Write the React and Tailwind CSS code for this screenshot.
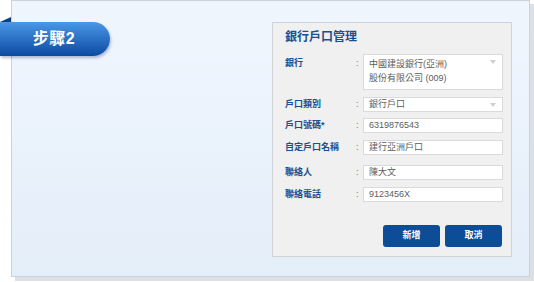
import React from "react"

const cjk = { fontFamily: '"Liberation Sans", "Noto Sans CJK TC", sans-serif' }

function Field({ label, children, className = "", labelClass = "" }) {
  return (
    <div className={`flex items-start ${className}`}>
      <div className={`w-[71px] text-[9px] leading-[15px] font-bold text-[#1b4f91] ${labelClass}`}>{label}</div>
      <div className={`w-[6px] text-[9px] leading-[15px] text-[#777] ${labelClass}`}>:</div>
      {children}
    </div>
  )
}

function Box({ children, select, tall }) {
  return (
    <div
      className={`relative w-[140px] ml-[1px] bg-white border border-[#dadada] text-[9px] text-[#5c5c5c] px-[5px] ${
        tall ? "h-[36px] pt-[2px] leading-[14px]" : "h-[15px] leading-[13px]"
      }`}
    >
      {children}
      {select && (
        <span className="absolute right-[6px] top-[5px] w-0 h-0 border-l-[3px] border-r-[3px] border-t-[4px] border-l-transparent border-r-transparent border-t-[#d0d0d0]" />
      )}
    </div>
  )
}

export default function App() {
  return (
    <div className="relative w-[534px] h-[282px] bg-white overflow-hidden" style={cjk}>
      <div className="ml-[11px] w-[519px] h-[277px] border border-[#ccd2da] bg-gradient-to-b from-[#f0f6fe] to-[#e4eef9] shadow-[4px_4px_0_#dcdfe3] flex pt-[21px]">
        <div className="ml-[260px] w-[240px] h-[235px] bg-[#f0f0f0] border border-[#cfd3d8] pl-[12px] pt-[6px]">
          <div className="text-[12px] leading-[16px] font-bold text-[#1b4f91]">銀行戶口管理</div>

          <Field label="銀行" className="mt-[9px]" labelClass="pt-[2px]">
            <Box select tall>
              <div>中國建設銀行(亞洲)</div>
              <div>股份有限公司 (009)</div>
            </Box>
          </Field>
          <Field label="戶口類別" className="mt-[7px]">
            <Box select>銀行戶口</Box>
          </Field>
          <Field label="戶口號碼*" className="mt-[6px]">
            <Box>6319876543</Box>
          </Field>
          <Field label="自定戶口名稱" className="mt-[7px]">
            <Box>建行亞洲戶口</Box>
          </Field>
          <Field label="聯絡人" className="mt-[10px]">
            <Box>陳大文</Box>
          </Field>
          <Field label="聯絡電話" className="mt-[7px]">
            <Box>9123456X</Box>
          </Field>

          <div className="flex justify-end gap-[5px] mt-[23px] pr-[9px]">
            <button className="w-[57px] h-[22px] rounded-[3px] bg-[#0d4d97] text-white text-[9px] font-bold">新增</button>
            <button className="w-[57px] h-[22px] rounded-[3px] bg-[#0d4d97] text-white text-[9px] font-bold">取消</button>
          </div>
        </div>
      </div>

      {/* step ribbon */}
      <div className="absolute left-0 top-[17px] w-0 h-0 border-b-[5px] border-l-[11px] border-b-[#0b3f88] border-l-transparent" />
      <div className="absolute left-0 top-[22px] w-[110px] h-[34px] rounded-r-full bg-gradient-to-b from-[#4a98e6] to-[#0b4aa3] shadow-[1px_2px_3px_rgba(40,70,120,0.35)] flex items-center justify-center pr-[2px]">
        <span className="text-white text-[16px] font-bold tracking-[0.5px]">步驟2</span>
      </div>
    </div>
  )
}
